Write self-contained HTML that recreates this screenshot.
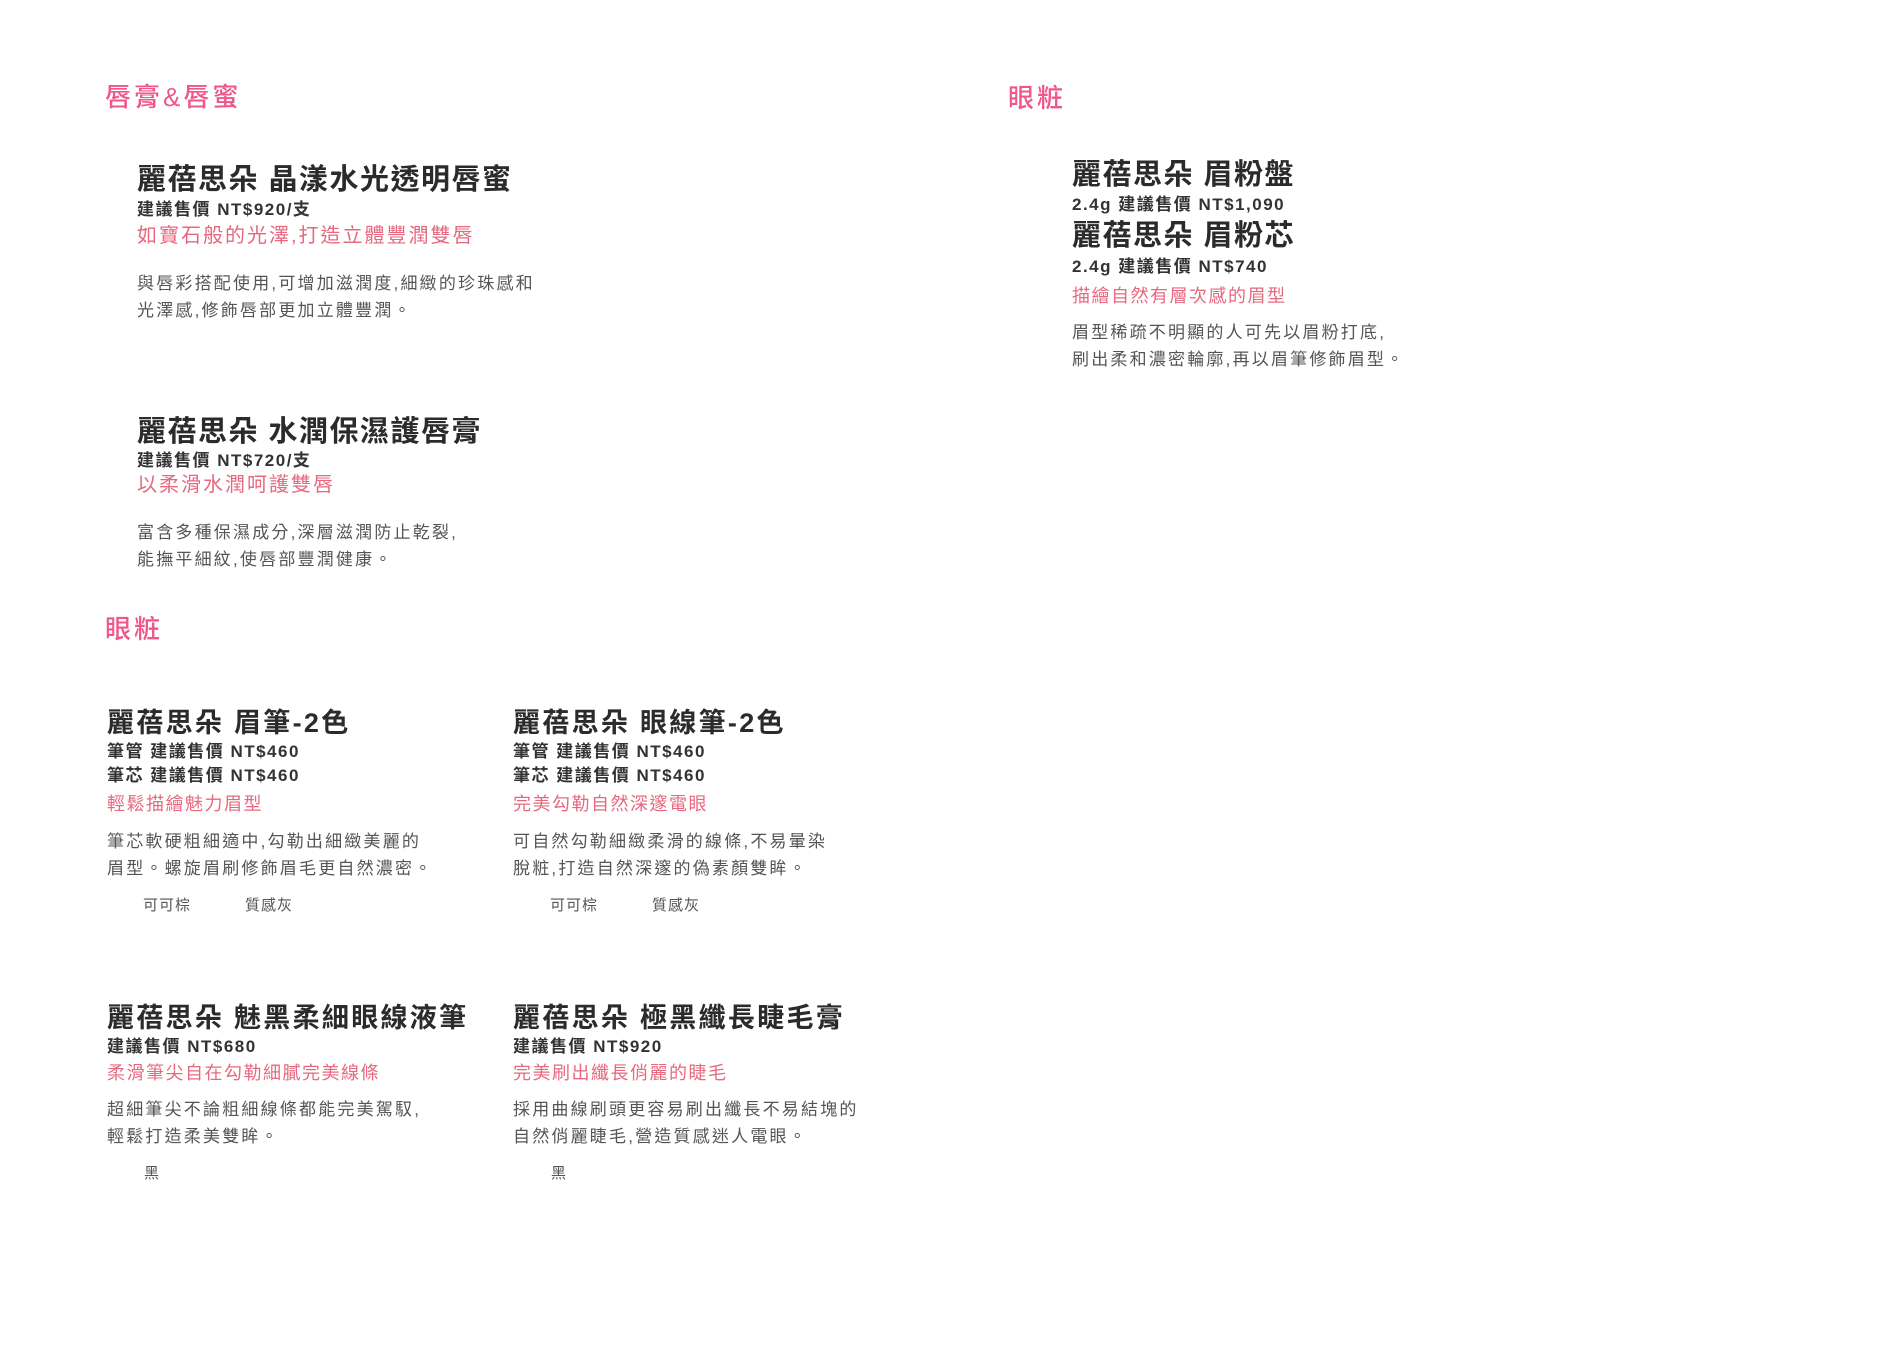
<!DOCTYPE html>
<html><head><meta charset="utf-8"><style>
html,body{margin:0;padding:0;background:#fff;width:1887px;height:1350px;overflow:hidden}
body{position:relative;font-family:"Liberation Sans","Noto Sans CJK TC",sans-serif;color:#333}
div{position:absolute;white-space:nowrap}
.h{color:#f0568a;font-size:26px;line-height:26px;letter-spacing:3px;font-weight:500}
.t{font-size:29px;line-height:29px;font-weight:bold;color:#2b2b2b;letter-spacing:1.5px}
.t2{font-size:27px;line-height:27px;font-weight:bold;color:#2b2b2b;letter-spacing:2.3px}
.p{font-size:17px;line-height:17px;font-weight:bold;color:#333;letter-spacing:1.5px}
.g{font-size:20px;line-height:20px;color:#e7697f;letter-spacing:2px}
.g2{font-size:18px;line-height:18px;color:#e7697f;letter-spacing:1.5px}
.b{font-size:17px;line-height:26.5px;color:#555;letter-spacing:2.2px}
.c{font-size:15px;line-height:15px;color:#555;letter-spacing:1px}
</style></head><body>
<div class="h" style="left:105px;top:84px">唇膏&amp;唇蜜</div>
<div class="t" style="left:137px;top:166px">麗蓓思朵 晶漾水光透明唇蜜</div>
<div class="p" style="left:137px;top:201px">建議售價 NT$920/支</div>
<div class="g" style="left:137px;top:226px">如寶石般的光澤,打造立體豐潤雙唇</div>
<div class="b" style="left:137px;top:271px">與唇彩搭配使用,可增加滋潤度,細緻的珍珠感和<br>光澤感,修飾唇部更加立體豐潤。</div>

<div class="t" style="left:137px;top:418px">麗蓓思朵 水潤保濕護唇膏</div>
<div class="p" style="left:137px;top:452px">建議售價 NT$720/支</div>
<div class="g" style="left:137px;top:475px">以柔滑水潤呵護雙唇</div>
<div class="b" style="left:137px;top:520px">富含多種保濕成分,深層滋潤防止乾裂,<br>能撫平細紋,使唇部豐潤健康。</div>

<div class="h" style="left:105px;top:616px">眼粧</div>

<div class="t2" style="left:107px;top:710px">麗蓓思朵 眉筆-2色</div>
<div class="p" style="left:107px;top:743px">筆管 建議售價 NT$460</div>
<div class="p" style="left:107px;top:767px">筆芯 建議售價 NT$460</div>
<div class="g2" style="left:107px;top:795px">輕鬆描繪魅力眉型</div>
<div class="b" style="left:107px;top:829px">筆芯軟硬粗細適中,勾勒出細緻美麗的<br>眉型。螺旋眉刷修飾眉毛更自然濃密。</div>
<div class="c" style="left:143px;top:898px">可可棕</div>
<div class="c" style="left:245px;top:898px">質感灰</div>

<div class="t2" style="left:513px;top:710px">麗蓓思朵 眼線筆-2色</div>
<div class="p" style="left:513px;top:743px">筆管 建議售價 NT$460</div>
<div class="p" style="left:513px;top:767px">筆芯 建議售價 NT$460</div>
<div class="g2" style="left:513px;top:795px">完美勾勒自然深邃電眼</div>
<div class="b" style="left:513px;top:829px">可自然勾勒細緻柔滑的線條,不易暈染<br>脫粧,打造自然深邃的偽素顏雙眸。</div>
<div class="c" style="left:550px;top:898px">可可棕</div>
<div class="c" style="left:652px;top:898px">質感灰</div>

<div class="t2" style="left:107px;top:1005px">麗蓓思朵 魅黑柔細眼線液筆</div>
<div class="p" style="left:107px;top:1038px">建議售價 NT$680</div>
<div class="g2" style="left:107px;top:1064px">柔滑筆尖自在勾勒細膩完美線條</div>
<div class="b" style="left:107px;top:1097px">超細筆尖不論粗細線條都能完美駕馭,<br>輕鬆打造柔美雙眸。</div>
<div class="c" style="left:144px;top:1166px">黑</div>

<div class="t2" style="left:513px;top:1005px">麗蓓思朵 極黑纖長睫毛膏</div>
<div class="p" style="left:513px;top:1038px">建議售價 NT$920</div>
<div class="g2" style="left:513px;top:1064px">完美刷出纖長俏麗的睫毛</div>
<div class="b" style="left:513px;top:1097px">採用曲線刷頭更容易刷出纖長不易結塊的<br>自然俏麗睫毛,營造質感迷人電眼。</div>
<div class="c" style="left:551px;top:1166px">黑</div>

<div class="h" style="left:1008px;top:85px">眼粧</div>
<div class="t" style="left:1072px;top:161px">麗蓓思朵 眉粉盤</div>
<div class="p" style="left:1072px;top:196px">2.4g 建議售價 NT$1,090</div>
<div class="t" style="left:1072px;top:222px">麗蓓思朵 眉粉芯</div>
<div class="p" style="left:1072px;top:258px">2.4g 建議售價 NT$740</div>
<div class="g2" style="left:1072px;top:287px">描繪自然有層次感的眉型</div>
<div class="b" style="left:1072px;top:320px">眉型稀疏不明顯的人可先以眉粉打底,<br>刷出柔和濃密輪廓,再以眉筆修飾眉型。</div>
</body></html>
